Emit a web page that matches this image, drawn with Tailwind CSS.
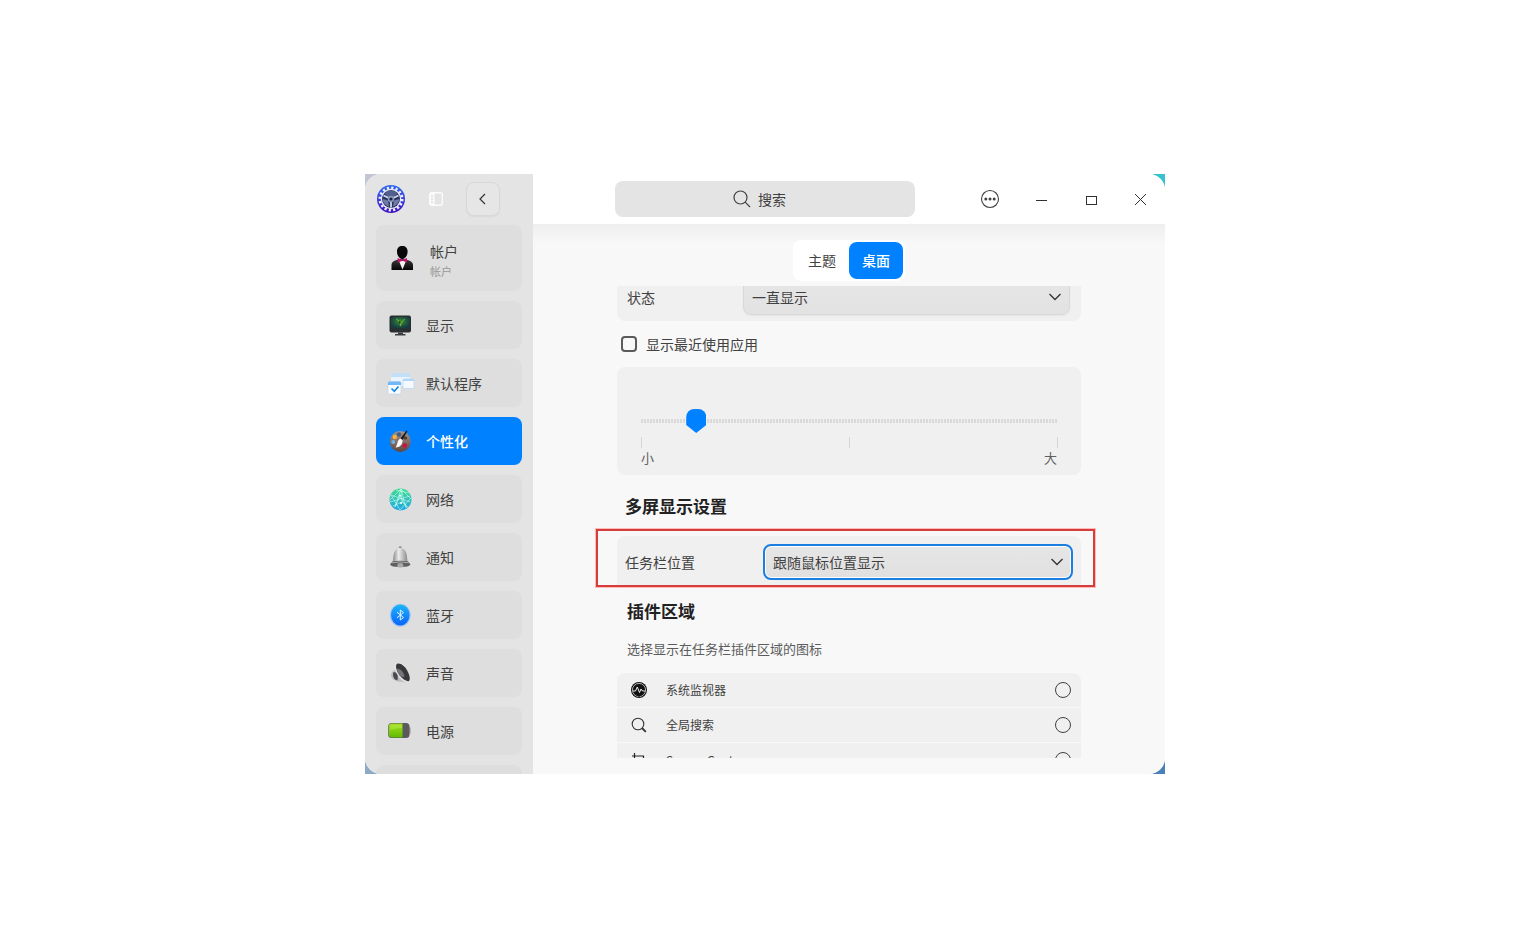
<!DOCTYPE html>
<html lang="zh-CN">

<head>
  <meta charset="utf-8" />
  <title>控制中心 - 个性化</title>
  <meta name="viewport" content="width=device-width, initial-scale=1" />
  <script src="https://cdn.jsdelivr.net/npm/@tailwindcss/browser@4"></script>
</head>

<body class="bg-white font-['Noto_Sans_CJK_SC',sans-serif] text-sm text-[#414141]">
  <div class="min-h-screen flex items-center justify-center pt-[3px] pl-[2px]">
    <div class="relative w-full max-w-[800px]">
      <!-- wallpaper behind the rounded corners -->
      <div class="absolute inset-0 flex">
        <div class="w-1/2 bg-linear-to-b from-[#c3c6d4] to-[#8ea8c8]"></div>
        <div class="w-1/2 bg-linear-to-b from-[#35c3cf] to-[#4a80ba]"></div>
      </div>

      <div class="relative flex h-[600px] rounded-2xl overflow-hidden bg-[#f8f8f8]">
        <!-- sidebar -->
        <aside class="w-[168px] shrink-0 bg-[#e4e4e4] overflow-hidden">
          <div class="h-[50px] flex items-center gap-4 pl-3">
            <svg class="size-7 shrink-0" viewBox="0 0 28 28">
              <defs>
                <linearGradient id="gear" x1="0" y1="0" x2="0" y2="1">
                  <stop offset="0" stop-color="#2f6cf0" />
                  <stop offset="1" stop-color="#4310c0" />
                </linearGradient>
              </defs>
              <circle cx="14" cy="14" r="14" fill="url(#gear)" />
              <circle cx="14" cy="14" r="11.2" fill="none" stroke="#eef0ff" stroke-width="2.6" stroke-dasharray="2.2 2.19" />
              <circle cx="14" cy="14" r="10.2" fill="#eceefa" />
              <circle cx="14" cy="14" r="9" fill="#2b3563" />
              <path d="M7.5 8.5A8.500 8.500 0 0 1 20.500 8.500L17 12H11Z" fill="#525e8c" />
              <path d="M5.500 14L11 15.500L12 21.500Q6.500 20 5.500 14Z" fill="#6f7aa6" />
              <path d="M22.500 14L17 15.500L16 21.500Q21.500 20 22.500 14Z" fill="#6f7aa6" />
              <path d="M14 14L6.500 10.500M14 14L21.500 10.500M14 14V22.500" stroke="#d3d8ea" stroke-width="1.800" />
              <circle cx="14" cy="14" r="3.200" fill="#8b96bb" />
              <circle cx="14" cy="14" r="1.600" fill="#1b2145" />
            </svg>
            <button class="w-[30px] h-7 flex items-center justify-center" aria-label="侧边栏">
              <svg class="w-3.5 h-3.5" viewBox="0 0 14 14" fill="none" stroke="#fbfbfb">
                <rect x="0.7" y="0.7" width="12.6" height="12.6" rx="2" stroke-width="1.4" />
                <path d="M1 1H5.5V13H1Z" fill="#fbfbfb" stroke="none" />
                <path d="M2 4H4M2 7H4M2 10H4" stroke="#cfcfcf" />
              </svg>
            </button>
            <button class="-ml-px size-[34px] flex items-center justify-center rounded-lg border border-[#d8d8d8] bg-[#e6e6e6] shadow-xs" aria-label="返回">
              <svg class="w-3 h-3" viewBox="0 0 12 12" fill="none" stroke="#333" stroke-width="1.2">
                <path d="M8 1L3 6L8 11" />
              </svg>
            </button>
          </div>

          <nav class="flex flex-col gap-2.5 pl-[11px] pr-[11px] pt-px">
            <a href="#" class="h-[66px] shrink-0 flex items-center gap-3.5 pl-3 rounded-lg bg-[#dedede]">
              <svg class="size-7 shrink-0" viewBox="0 0 28 28">
                <defs>
                  <linearGradient id="suit" x1="0" y1="0" x2="0" y2="1">
                    <stop offset="0" stop-color="#3c3c3c" />
                    <stop offset="1" stop-color="#050505" />
                  </linearGradient>
                </defs>
                <path d="M3.5 26V21C3.5 17.5 7 16.5 10 15.5L14 15L18 15.5C21 16.5 25 17.5 25 21V26Z" fill="url(#suit)" />
                <path d="M11 17L14.5 25.5L18 17Z" fill="#f4f4f4" />
                <path d="M9.5 14L14.5 16L19 14V18.5L14.5 16.8L10 18.5Z" fill="#c5106c" />
                <path d="M14.3 2C17.8 2 19.8 4.2 19.6 8C19.4 12 17 15 14.3 15C11.6 15 9.2 12 9 8C8.8 4.2 10.8 2 14.3 2Z" fill="#080808" />
              </svg>
              <span class="flex flex-col pt-1.5">
                <span class="leading-5">帐户</span>
                <span class="text-[11px] leading-5 text-[#999]">帐户</span>
              </span>
            </a>
            <a href="#" class="h-12 shrink-0 flex items-center gap-3.5 pl-3 rounded-lg bg-[#dedede]">
              <svg class="size-6 shrink-0" viewBox="0 0 24 24">
                <defs>
                  <radialGradient id="screen" cx="0.5" cy="0.4" r="0.6">
                    <stop offset="0" stop-color="#4f9a2c" />
                    <stop offset="0.5" stop-color="#216040" />
                    <stop offset="1" stop-color="#173a40" />
                  </radialGradient>
                </defs>
                <rect x="1.5" y="2.500" width="21.5" height="17" rx="2" fill="#2b2e30" />
                <rect x="3" y="4" width="18.5" height="11.5" fill="url(#screen)" />
                <path d="M8 6C11 7 12 9 12.5 13C13 10 14 8 17 6" fill="none" stroke="#7fc23a" stroke-width="0.8" />
                <path d="M10.500 9L12.5 8L12 11Z" fill="#0c2b1c" />
                <path d="M10 19.5H15V21H17.5V22.500H7V21H10Z" fill="#3a3d3f" />
              </svg>
              <span>显示</span>
            </a>
            <a href="#" class="h-12 shrink-0 flex items-center gap-3.5 pl-3 rounded-lg bg-[#dedede]">
              <svg class="size-6 shrink-0 overflow-visible" viewBox="0 0 24 24">
                <rect x="3" y="2" width="19" height="13" rx="1.5" fill="#eaf4fd" />
                <path d="M3 6V3.5Q3 2 4.5 2H20.5Q22 2 22 3.5V6Z" fill="#c2dff8" />
                <rect x="15" y="8" width="11" height="9.5" rx="1.5" fill="#f3f9ff" stroke="#b5d2ee" stroke-width="0.6" />
                <path d="M15 10V9Q15 8 16 8H25Q26 8 26 9V10Z" fill="#b2d6f6" />
                <rect x="0" y="10.5" width="13" height="12.5" rx="1.5" fill="#fafdff" stroke="#b9cfe4" stroke-width="0.6" />
                <path d="M0 14V12Q0 10.5 1.5 10.5H11.5Q13 10.5 13 12V14Z" fill="#72b8f8" />
                <path d="M3.5 17.500L6.300 20.300L10.500 15.500" fill="none" stroke="#1587e8" stroke-width="1.700" />
              </svg>
              <span>默认程序</span>
            </a>
            <a href="#" aria-current="page" class="h-12 shrink-0 flex items-center gap-3.5 pl-3 rounded-lg bg-[#0081ff] text-white font-medium">
              <svg class="size-6 shrink-0" viewBox="0 0 24 24">
                <defs>
                  <linearGradient id="palette" x1="0" y1="0" x2="0" y2="1">
                    <stop offset="0" stop-color="#a8938a" />
                    <stop offset="1" stop-color="#5f4741" />
                  </linearGradient>
                </defs>
                <circle cx="12.3" cy="12.5" r="10.5" fill="url(#palette)" />
                <circle cx="11" cy="5.5" r="2.2" fill="#3e5f8c" />
                <circle cx="6.8" cy="8" r="2.2" fill="#f1b33c" />
                <circle cx="5.3" cy="13" r="2" fill="#6eb2e6" />
                <circle cx="16.8" cy="16.5" r="2.3" fill="#c91440" />
                <circle cx="17.5" cy="9" r="1.6" fill="#483630" />
                <path d="M18.5 1.5L12.5 9.5L14.5 11L19.500 2Z" fill="#181818" />
                <path d="M12.5 9.5C9 11 10 15 7.5 18.5C12 18.5 15 15 14.5 11Z" fill="#fafafa" />
              </svg>
              <span>个性化</span>
            </a>
            <a href="#" class="h-12 shrink-0 flex items-center gap-3.5 pl-3 rounded-lg bg-[#dedede]">
              <svg class="size-6 shrink-0" viewBox="0 0 24 24">
                <defs>
                  <linearGradient id="globe" x1="0" y1="0" x2="0" y2="1">
                    <stop offset="0" stop-color="#42dc91" />
                    <stop offset="1" stop-color="#20a6e4" />
                  </linearGradient>
                </defs>
                <circle cx="12.5" cy="12.5" r="11" fill="url(#globe)" />
                <path d="M13 2L7 20M13 2L18 21M13 2L14 16M3 8L22 15M2 15L22 9M5 19L14 15L20 20M3 8L12 23L22 12M8 3L21 6M2 13L13 2L23 12M7 20L12 9L19 21" fill="none" stroke="#c9fff2" stroke-width="0.7" opacity="0.85" />
                <circle cx="13" cy="16" r="1" fill="#fff" />
                <circle cx="12" cy="8.5" r="1" fill="#eafff8" />
              </svg>
              <span>网络</span>
            </a>
            <a href="#" class="h-12 shrink-0 flex items-center gap-3.5 pl-3 rounded-lg bg-[#dedede]">
              <svg class="size-6 shrink-0" viewBox="0 0 24 24">
                <defs>
                  <linearGradient id="bell" x1="0" y1="0" x2="1" y2="0">
                    <stop offset="0" stop-color="#828282" />
                    <stop offset="0.4" stop-color="#ececec" />
                    <stop offset="1" stop-color="#858585" />
                  </linearGradient>
                </defs>
                <circle cx="12.2" cy="2.6" r="1.5" fill="#9a9a9a" />
                <path d="M4.500 18C6 14 4 3.500 12.2 3C20.500 3.500 18.500 14 20 18Z" fill="url(#bell)" />
                <path d="M4.500 16.500Q12 15 20 16.500L22.5 19.500Q21.500 22 12 22Q3 22 2 19.500Z" fill="#5e5e5e" />
                <path d="M4 17.800Q12 16 20.5 17.800" fill="none" stroke="#c0c0c0" stroke-width="0.8" />
                <ellipse cx="12.3" cy="20.300" rx="3" ry="2.300" fill="#a9a9a9" />
              </svg>
              <span>通知</span>
            </a>
            <a href="#" class="h-12 shrink-0 flex items-center gap-3.5 pl-3 rounded-lg bg-[#dedede]">
              <svg class="size-6 shrink-0" viewBox="0 0 24 24">
                <defs>
                  <linearGradient id="bt" x1="0" y1="0" x2="0" y2="1">
                    <stop offset="0" stop-color="#1cb6fb" />
                    <stop offset="1" stop-color="#0a63fb" />
                  </linearGradient>
                </defs>
                <ellipse cx="12.3" cy="12.300" rx="10.500" ry="11.500" fill="#8cbdf5" opacity="0.7" />
                <ellipse cx="12.3" cy="12" rx="9.3" ry="10.5" fill="url(#bt)" />
                <path d="M9 9.200L15.500 14.500L12.300 17V7L15.500 9.500L9 14.800" fill="none" stroke="#e8f5ff" stroke-width="1" />
              </svg>
              <span>蓝牙</span>
            </a>
            <a href="#" class="h-12 shrink-0 flex items-center gap-3.5 pl-3 rounded-lg bg-[#dedede]">
              <svg class="size-6 shrink-0" viewBox="0 0 24 24">
                <path d="M9 7L4 11Q1.500 15 5 18.500L10 20.500L19 21.500Z" fill="#bdbdc0" />
                <path d="M5.500 11Q4 15 7 18.500L9.500 19.500L10 12Z" fill="#4a4a4d" />
                <path d="M7.500 2.500C11 0 17 3 20 9C23 15 24 20 21.500 21.800C19 23 12.500 19.500 9.500 14C6.500 9 5.500 4.500 7.500 2.500Z" fill="#e2e2e4" />
                <path d="M8.800 3C11.500 1.500 16.500 4.500 19.200 9.500C21.800 14.500 22.500 18.500 21 20C18.800 21 13.500 17.500 10.700 13C8 8.500 7.300 4.500 8.800 3Z" fill="#38383b" />
                <path d="M9 8C11.500 7 16 11 16.500 15.500C15 17 12 15.500 10.500 13Q9 10.500 9 8Z" fill="#737378" />
              </svg>
              <span>声音</span>
            </a>
            <a href="#" class="h-12 shrink-0 flex items-center gap-3.5 pl-3 rounded-lg bg-[#dedede]">
              <svg class="size-6 shrink-0" viewBox="0 0 24 24">
                <defs>
                  <linearGradient id="battery" x1="0" y1="0" x2="0" y2="1">
                    <stop offset="0" stop-color="#a3e01c" />
                    <stop offset="1" stop-color="#5fbb05" />
                  </linearGradient>
                </defs>
                <rect x="19.500" y="8" width="3.200" height="7" rx="1.5" fill="#a7a7a7" />
                <rect x="0.2" y="4" width="21.300" height="15" rx="3.500" fill="#5a5a5c" />
                <path d="M4 4.500H14.500V18.500H4Q0.800 18.500 0.800 15.500V7.500Q0.800 4.500 4 4.500Z" fill="url(#battery)" />
                <path d="M3.500 6H14V9Q8 9 2.500 11V7.500Z" fill="#c4ef5a" opacity="0.4" />
              </svg>
              <span>电源</span>
            </a>
            <a href="#" class="h-12 shrink-0 rounded-lg bg-[#dedede]" aria-label="鼠标"></a>
          </nav>
        </aside>

        <!-- main -->
        <main class="flex-1 min-w-0 flex flex-col">
          <header class="h-[50px] shrink-0 flex items-center bg-white pl-[82px]">
            <label class="h-9 w-full max-w-[300px] flex items-center gap-[7px] px-[118px] rounded-lg bg-[#e4e4e4]">
              <svg class="size-[18px] shrink-0" viewBox="0 0 18 18" fill="none" stroke="#414141" stroke-width="1.2">
                <circle cx="7.5" cy="7.5" r="6.5" />
                <path d="M12.2 12.2L17 17" />
              </svg>
              <input type="text" placeholder="搜索" aria-label="搜索" class="flex-1 min-w-0 bg-transparent outline-none placeholder:text-[#414141]" />
            </label>
            <div class="ml-auto flex shrink-0">
              <button class="w-[50px] h-[50px] flex items-center justify-center" aria-label="菜单">
                <svg class="size-5" viewBox="0 0 20 20">
                  <circle cx="10" cy="10" r="8.5" fill="none" stroke="#414141" stroke-width="1.1" />
                  <circle cx="5.8" cy="10" r="1.5" fill="#414141" />
                  <circle cx="10" cy="10" r="1.5" fill="#414141" />
                  <circle cx="14.2" cy="10" r="1.5" fill="#414141" />
                </svg>
              </button>
              <button class="w-[50px] h-[50px] flex items-center justify-center" aria-label="最小化">
                <svg class="size-3.5" viewBox="0 0 14 14" stroke="#303030"><path d="M3 8.5H14" /></svg>
              </button>
              <button class="w-[50px] h-[50px] flex items-center justify-center" aria-label="最大化">
                <svg class="size-3.5" viewBox="0 0 14 14" fill="none" stroke="#303030"><rect x="3.5" y="4.5" width="10" height="8" /></svg>
              </button>
              <button class="w-[50px] h-[50px] flex items-center justify-center" aria-label="关闭">
                <svg class="size-3.5" viewBox="0 0 14 14" stroke="#303030"><path d="M2 2L13 13M13 2L2 13" /></svg>
              </button>
            </div>
          </header>

          <div class="flex-1 min-h-0 flex flex-col bg-linear-to-b from-[#eeeeee] to-[#f8f8f8] to-[20px] pt-4 pb-4">
            <div class="flex justify-center">
              <div class="flex p-0.5 rounded-lg bg-white">
                <button class="w-[54px] h-[37px] pb-0.5 rounded-lg">主题</button>
                <button class="w-[54px] h-[37px] pb-0.5 rounded-lg bg-[#0081ff] text-white font-medium">桌面</button>
              </div>
            </div>

            <!-- list scrolled under the tabs -->
            <div class="mt-[5px] flex-1 min-h-0 overflow-hidden px-[84px]">
              <div class="-mt-[13px] h-12 flex items-center justify-between pl-2.5 pr-[11px] rounded-lg bg-[#f0f0f0]">
                <label for="state">状态</label>
                <div class="relative w-[327px]">
                  <select id="state" class="w-full h-9 pl-2 appearance-none rounded-lg border border-[#d8d8d8] bg-linear-to-b from-[#e6e6e6] to-[#e2e2e2] shadow-xs outline-none">
                    <option>一直显示</option>
                  </select>
                  <svg class="absolute right-[7px] top-3 w-4 h-3 pointer-events-none" viewBox="0 0 16 12" fill="none" stroke="#333" stroke-width="1.3"><path d="M2.500 3L8 8.500L13.500 3" /></svg>
                </div>
              </div>

              <label class="h-[46px] flex items-center gap-[9px] pl-1">
                <input type="checkbox" class="size-4 appearance-none rounded-sm border-2 border-[#5a5a5a]" />
                <span>显示最近使用应用</span>
              </label>

              <div class="h-[108px] px-6 pt-[42px] rounded-lg bg-[#f0f0f0]">
                <input type="range" min="0" max="70" value="8" aria-label="大小" class="block w-full h-6 appearance-none bg-transparent outline-none [&::-webkit-slider-runnable-track]:h-1 [&::-webkit-slider-runnable-track]:bg-[repeating-linear-gradient(90deg,#d9d9d9_0_2px,transparent_2px_3px)] [&::-webkit-slider-thumb]:appearance-none [&::-webkit-slider-thumb]:w-5 [&::-webkit-slider-thumb]:h-6 [&::-webkit-slider-thumb]:-mt-2.5 [&::-webkit-slider-thumb]:bg-[#0081ff] [&::-webkit-slider-thumb]:[clip-path:path('M8,0H12A8,8,0,0,1,20,8V16L10,24L0,16V8A8,8,0,0,1,8,0Z')]" />
                <div class="mt-1 -mr-px h-[11px] flex justify-between">
                  <span class="w-px bg-[#d4d4d4]"></span>
                  <span class="w-px bg-[#d4d4d4]"></span>
                  <span class="w-px bg-[#d4d4d4]"></span>
                </div>
                <div class="flex justify-between text-[13px] leading-5 text-[#606060]">
                  <span>小</span>
                  <span>大</span>
                </div>
              </div>

              <h2 class="h-[61px] flex items-center pl-2 pt-px text-[17px] font-bold text-[#222]">多屏显示设置</h2>

              <div class="relative h-[52px] flex items-center justify-between px-2 rounded-t-lg bg-linear-to-b from-[#f0f0f0] from-95% to-[#f8f8f8] to-95%">
                <label for="dock">任务栏位置</label>
                <div class="relative w-[310px]">
                  <select id="dock" class="w-full h-9 pl-2 appearance-none rounded-lg border-2 border-[#1a7fe0] bg-linear-to-b from-[#e6e6e6] to-[#e0e0e0] inset-ring inset-ring-white outline-none">
                    <option>跟随鼠标位置显示</option>
                  </select>
                  <svg class="absolute right-2 top-3 w-4 h-3 pointer-events-none" viewBox="0 0 16 12" fill="none" stroke="#333" stroke-width="1.3"><path d="M2.500 3L8 8.500L13.500 3" /></svg>
                </div>
                <div class="absolute -left-[21px] -right-3.5 -top-[7px] bottom-px border-2 border-[#d53c3c] ring-1 ring-[#ffb9b9] pointer-events-none"></div>
              </div>

              <h2 class="h-[46px] flex items-center pl-2.5 text-[17px] font-bold text-[#222]">插件区域</h2>
              <p class="h-[39px] pl-2.5 leading-[29px] text-[13px] text-[#5c5c5c]">选择显示在任务栏插件区域的图标</p>

              <div class="flex flex-col gap-px rounded-lg overflow-hidden text-xs">
                <label class="h-[34px] shrink-0 flex items-center gap-[18px] pl-[13px] pr-2.5 bg-[#f0f0f0]">
                  <svg class="size-[18px] shrink-0" viewBox="0 0 18 18">
                    <circle cx="9" cy="9" r="8" fill="#111" />
                    <circle cx="9" cy="9" r="6.6" fill="none" stroke="#f0f0f0" stroke-width="0.7" />
                    <path d="M3 10H5.5L7.3 6L9.5 11.5L11 8L12.5 10H15" fill="none" stroke="#f0f0f0" stroke-width="1" />
                    <path d="M5 13H13L9 16Z" fill="#111" />
                  </svg>
                  <span class="flex-1">系统监视器</span>
                  <input type="checkbox" class="size-4 appearance-none rounded-full border border-[#414141]" />
                </label>
                <label class="h-[34px] shrink-0 flex items-center gap-[18px] pl-[13px] pr-2.5 bg-[#f0f0f0]">
                  <svg class="size-[18px] shrink-0" viewBox="0 0 18 18" fill="none" stroke="#333">
                    <circle cx="8" cy="8" r="5.8" stroke-width="1.1" />
                    <path d="M12 12L15.800 15.800" stroke-width="1.8" />
                  </svg>
                  <span class="flex-1">全局搜索</span>
                  <input type="checkbox" class="size-4 appearance-none rounded-full border border-[#414141]" />
                </label>
                <label class="h-[34px] shrink-0 flex items-center gap-[18px] pl-[13px] pr-2.5 bg-[#f0f0f0]">
                  <svg class="size-[18px] shrink-0" viewBox="0 0 18 18" fill="none" stroke="#222" stroke-width="1.2">
                    <path d="M4.500 2V14H16M2 5H13.500V16" />
                  </svg>
                  <span class="flex-1">Screen Capture</span>
                  <input type="checkbox" class="size-4 appearance-none rounded-full border border-[#414141]" />
                </label>
              </div>
            </div>
          </div>
        </main>
      </div>
    </div>
  </div>
</body>

</html>
